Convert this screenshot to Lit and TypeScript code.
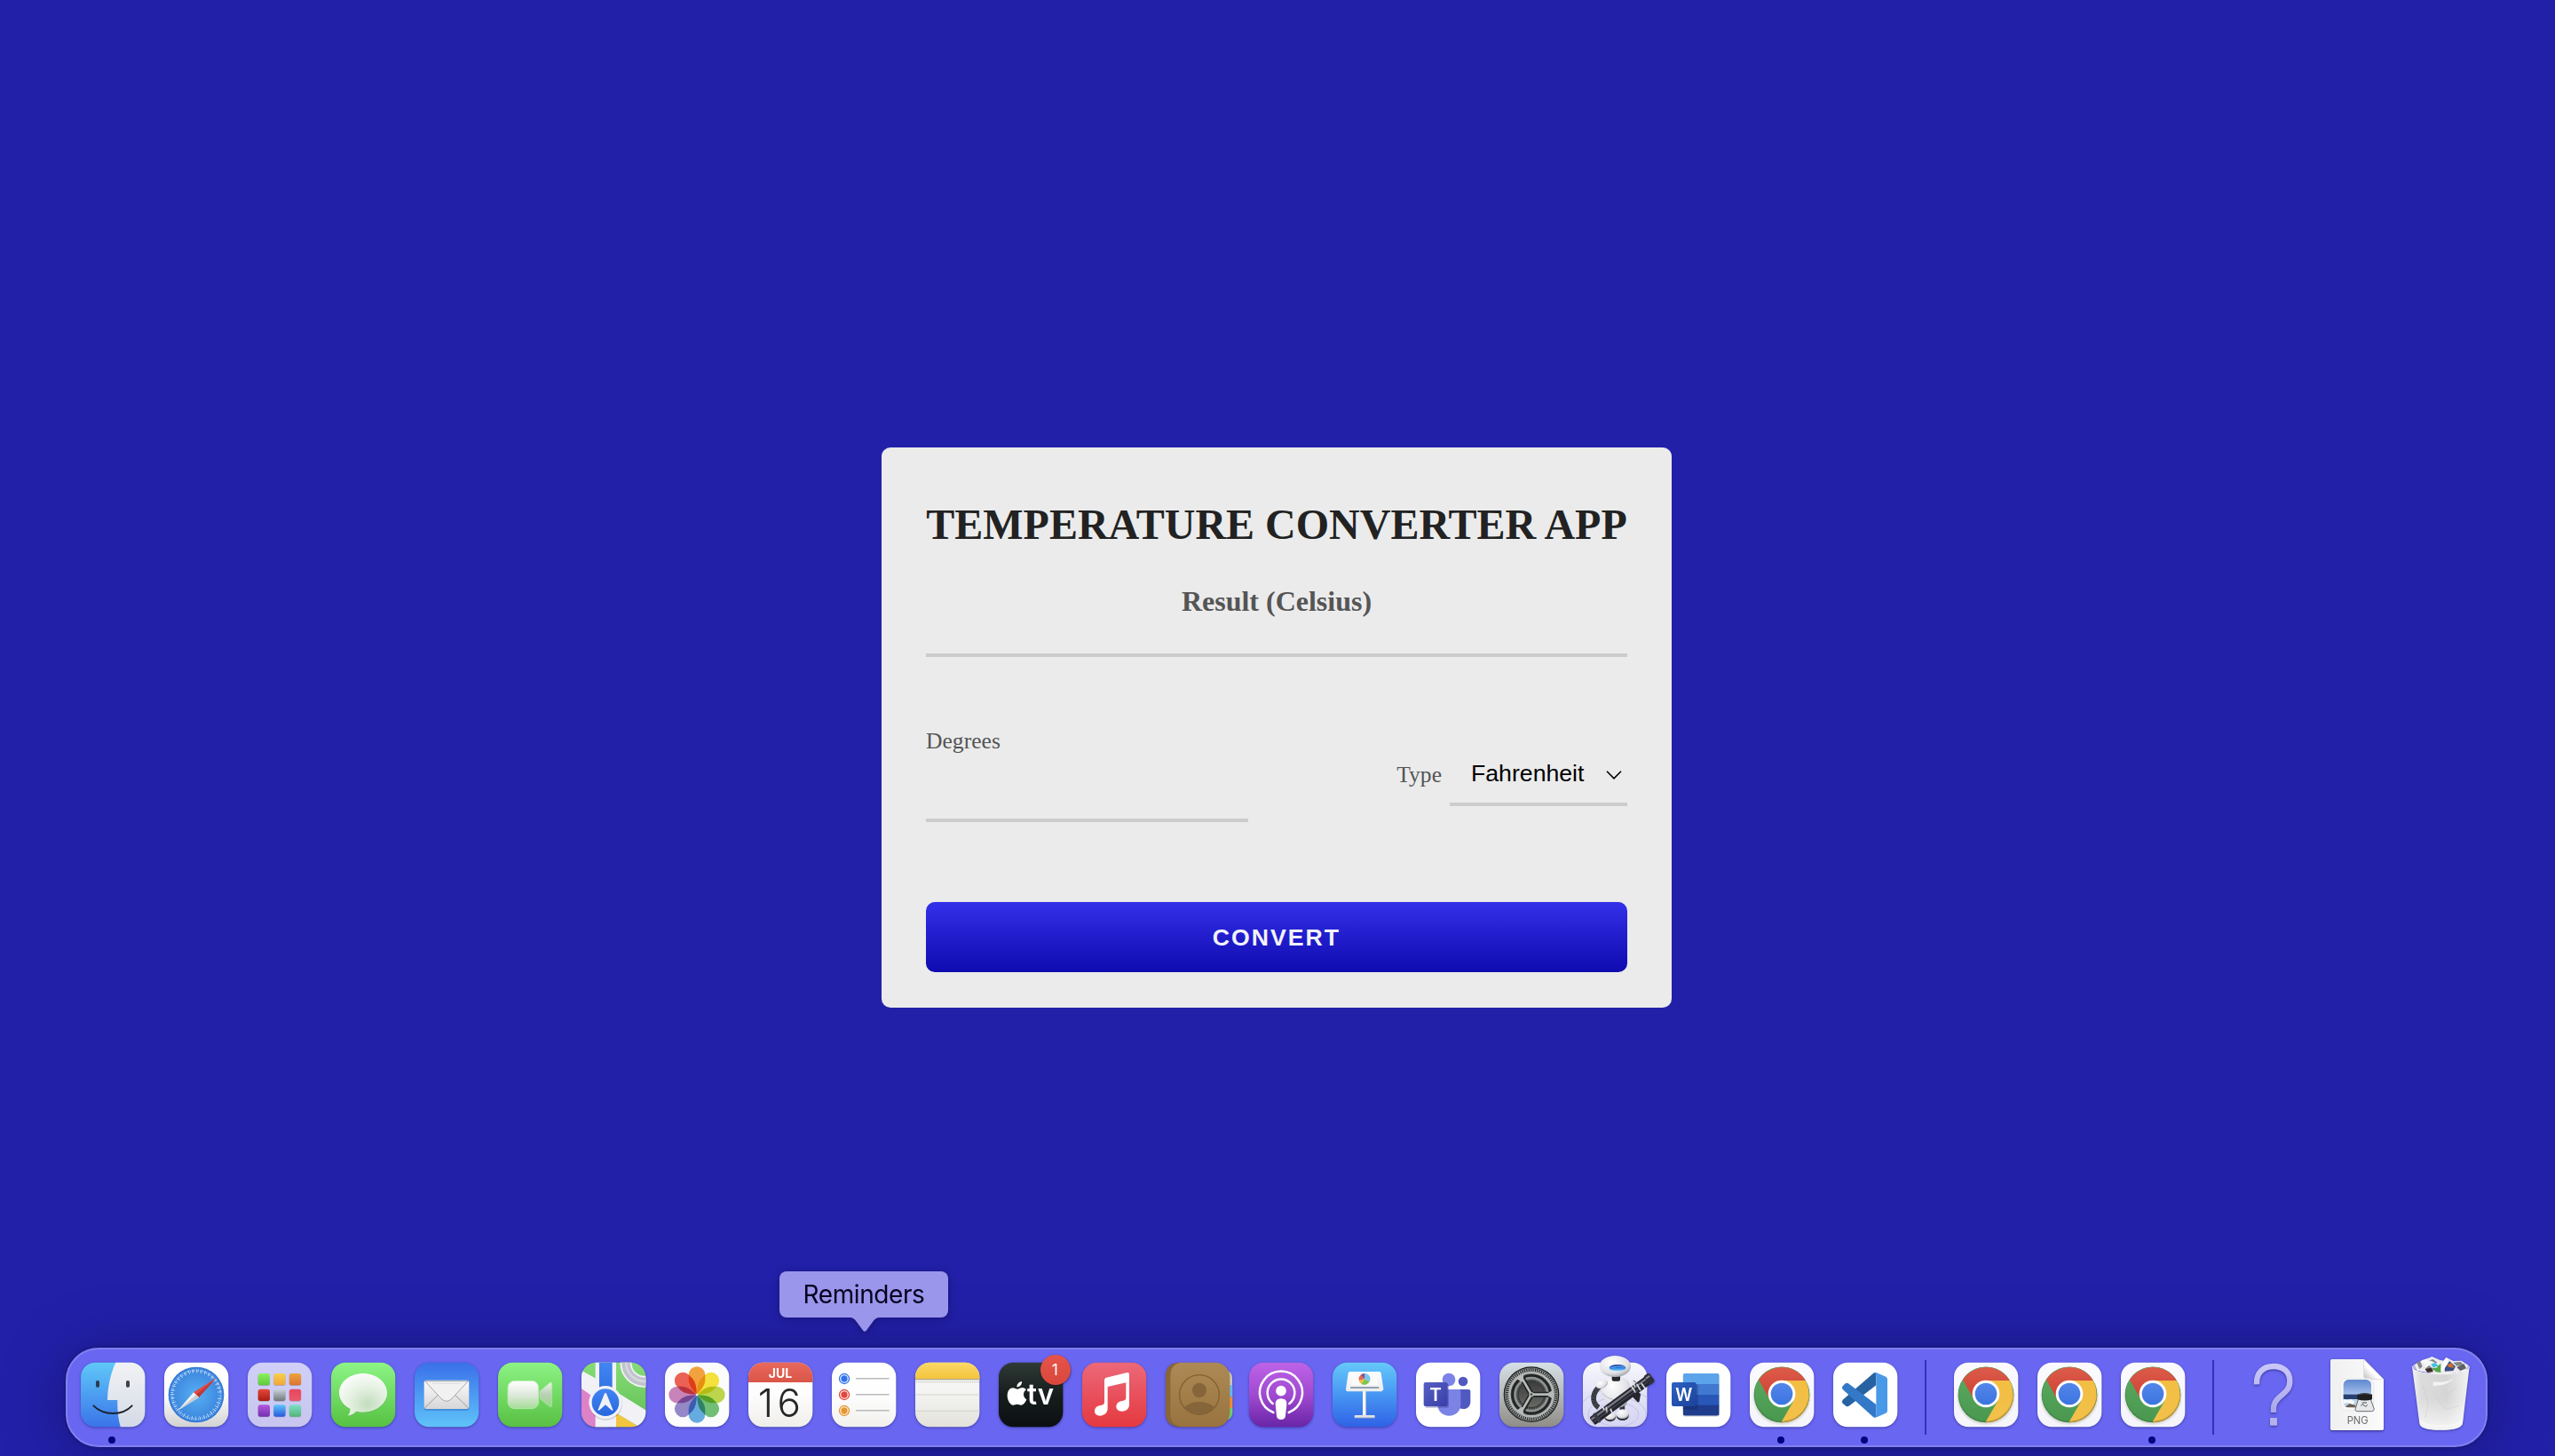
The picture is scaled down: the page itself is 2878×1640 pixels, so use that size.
import { LitElement, html, css, svg, nothing, TemplateResult } from "lit";
import { customElement, state } from "lit/decorators.js";

/* ---------- svg helpers ---------- */

// Vertical gradient.
const vgrad = (id: string, ...stops: string[]) => svg`
  <linearGradient id=${id} x1="0" y1="0" x2="0" y2="1">
    ${stops.map((c, i) => svg`<stop offset=${i / (stops.length - 1)} stop-color=${c}></stop>`)}
  </linearGradient>`;

// Rounded app tile, 217 units wide, at the icon's origin.
const tile = (x: number, y: number, fill: string) =>
  svg`<rect x=${x} y=${y - 0.5} width="217" height="217" rx="49" fill=${fill}></rect>`;

interface DockIcon {
  name: string;
  x: number;
  y?: number;
  art: TemplateResult | unknown;
  running?: boolean;
  tip?: boolean;
}

/* ---------- icons ---------- */

const finder = svg`
  <defs>${vgrad("fi-a", "#5fc8f8", "#3a74ea")}${vgrad("fi-b", "#f3f3f5", "#d3dae6")}
    <clipPath id="fi-c"><rect x="93" y="104.500" width="217" height="217" rx="49"></rect></clipPath></defs>
  ${tile(93, 105, "url(#fi-a)")}
  <path clip-path="url(#fi-c)" fill="url(#fi-b)" d="M213 100C194 138 184 186 183 231H217C216 262 219 294 228 325H312V100Z"></path>
  <rect x="144" y="165" width="12" height="23" rx="5" fill="#2b3b50"></rect>
  <rect x="246" y="165" width="12" height="23" rx="5" fill="#3b4148"></rect>
  <path d="M136 250Q162 276 202 276T266 250" fill="none" stroke="#1b222c" stroke-width="5.500" stroke-linecap="round"></path>`;

const safari = svg`
  <defs>${vgrad("sa-a", "#ffffff", "#fdfdfd", "#d2d2d2")}${vgrad("sa-b", "#2f79d4", "#2f6fd6")}
    <radialGradient id="sa-c"><stop offset="0" stop-color="#57b0f2"></stop><stop offset="1" stop-color="#3a83dd"></stop></radialGradient></defs>
  ${tile(375, 105, "url(#sa-a)")}
  <circle cx="483" cy="213" r="94" fill="url(#sa-b)"></circle>
  <circle cx="483" cy="213" r="91" fill="url(#sa-c)"></circle>
  <circle cx="483" cy="213" r="79.500" fill="none" stroke="#d8ecfb" stroke-width="13" stroke-dasharray="1.900 12" stroke-dashoffset="1"></circle>
  <circle cx="483" cy="213" r="82" fill="none" stroke="#d8ecfb" stroke-width="8" stroke-dasharray="1.900 5.257" stroke-dashoffset="1"></circle>
  <path d="M550 157L474 205L483 213L492 222Z" fill="#e34a41"></path>
  <path d="M550 157L483 213L492 222Z" fill="#b93a3a"></path>
  <path d="M421 266L474 205L492 222Z" fill="#f3f3f3"></path>
  <path d="M421 266L483 213L492 222Z" fill="#c9cdd2"></path>`;

const padColors = [
  ["#8cf05f", "#5cc93c"], ["#f7cf4b", "#efa73a"], ["#eda23b", "#dc7433"],
  ["#e5483a", "#a91c14"], ["#c9d4dc", "#71777a"], ["#e8455f", "#e9596c"],
  ["#b457e0", "#7430b0"], ["#5cc4fb", "#2a59dd"], ["#7edfc9", "#52b578"],
];
const launchpad = svg`
  <defs>${vgrad("la-t", "#cfcff8", "#c8c6ee")}${padColors.map((c, i) => vgrad("la-" + i, c[0], c[1]))}</defs>
  ${tile(657, 105, "url(#la-t)")}
  ${padColors.map((_, i) => svg`
    <rect x=${692 + (i % 3) * 52.7} y=${143 + Math.floor(i / 3) * 53} width="40" height="40" rx="8" fill="#00000030"></rect>
    <rect x=${692 + (i % 3) * 52.7} y=${141 + Math.floor(i / 3) * 53} width="40" height="40" rx="8" fill=${`url(#la-${i})`}></rect>`)}`;

const messages = svg`
  <defs>${vgrad("me-a", "#8cf585", "#57c143")}
    <radialGradient id="me-b" cx=".6" cy=".72" r=".8"><stop offset="0" stop-color="#c3dcbd"></stop><stop offset=".45" stop-color="#e2efdf"></stop><stop offset="1" stop-color="#ffffff"></stop></radialGradient></defs>
  ${tile(939, 105, "url(#me-a)")}
  <path d="M1047 144C1002 144 966 173 966 209C966 231 980 251 1003 262C1004 271 1001 279 995 286C1007 284 1017 279 1024 271C1032 273 1039 274 1047 274C1092 274 1128 245 1128 209S1092 144 1047 144Z" fill="#00501822"></path>
  <path d="M1047 141C1002 141 966 171 966 207C966 229 980 249 1003 260C1004 269 1001 277 995 284C1007 282 1017 277 1024 269C1032 271 1039 272 1047 272C1092 272 1128 243 1128 207S1092 141 1047 141Z" fill="url(#me-b)"></path>`;

const mail = svg`
  <defs>${vgrad("ma-a", "#3a70ea", "#5fc3f9")}${vgrad("ma-b", "#fbfbfb", "#d6d6d8")}</defs>
  ${tile(51, 105, "url(#ma-a)")}
  <rect x="83" y="169" width="152" height="97" rx="8" fill="#1c4a9a55"></rect>
  <rect x="83" y="164" width="152" height="97" rx="8" fill="url(#ma-b)"></rect>
  <path d="M85 258L129 215M233 258L189 215" stroke="#8e8e90" stroke-width="2.500"></path>
  <path d="M86 167L139 224Q159 246 179 224L232 167Z" fill="#f1f1f1" stroke="#a6a6a8" stroke-width="3"></path>
  <path d="M112 175H207" stroke="#dedede" stroke-width="3"></path>`;

const facetime = svg`
  <defs>${vgrad("fa-a", "#8cf384", "#59c044")}${vgrad("fa-b", "#ffffff", "#dfe9dc", "#a5dc98")}${vgrad("fa-c", "#eaf5e8", "#b9cfb5", "#97d98a")}</defs>
  ${tile(333, 105, "url(#fa-a)")}
  <rect x="366" y="166" width="104" height="94" rx="23" fill="url(#fa-b)" stroke="#b4ecab" stroke-width="2.500"></rect>
  <path d="M479 197L507 173Q515 168 515 178V247Q515 257 507 252L479 230Q474 226 474 213T479 197Z" fill="url(#fa-c)" stroke="#b4ecab" stroke-width="2"></path>`;

const maps = svg`
  <defs><clipPath id="mp-c"><rect x="615" y="104.500" width="217" height="217" rx="49"></rect></clipPath>
    ${vgrad("mp-b", "#4285f2", "#2766dd")}${vgrad("mp-g", "#86dc78", "#5fbf50")}</defs>
  <g clip-path="url(#mp-c)">
    <rect x="612" y="102" width="222" height="222" fill="url(#mp-g)"></rect>
    <path d="M612 186L700 240V324H612Z" fill="#dd82c6"></path>
    <path d="M728 272L815 324H728Z" fill="#f2c53f"></path>
    <path d="M612 130L664 158L735 205L834 266V324H815L728 272L612 190Z" fill="#f1f1f6"></path>
    <rect x="662" y="102" width="70" height="222" fill="#f1f1f6"></rect>
    <rect x="675" y="102" width="44" height="170" fill="url(#mp-b)"></rect>
    <circle cx="828" cy="106" r="63" fill="none" stroke="#f4f4f8" stroke-width="39"></circle>
    <circle cx="828" cy="106" r="63" fill="none" stroke="#c2c4cd" stroke-width="29"></circle>
    <circle cx="828" cy="106" r="62" fill="none" stroke="#d6d8df" stroke-width="7"></circle>
  </g>
  <circle cx="697" cy="243" r="56" fill="#00000028"></circle>
  <circle cx="696" cy="239" r="56" fill="#f0f1f7"></circle>
  <circle cx="696" cy="239" r="46" fill="url(#mp-b)"></circle>
  <path d="M692 211Q696 202 700 211L721 263Q722 269 716 265L696 247L676 265Q670 269 671 263Z" fill="#f0f1f6"></path>`;

const petals = ["#f09a2e", "#f2df2f", "#b6d23f", "#66b96c", "#5aa5de", "#8c7fc4", "#c47ab4", "#ea5547"];
const photos = svg`
  ${tile(897, 105, "#fcfcfc")}
  <g class="blend">
    ${petals.map((c, i) => svg`<path class="petal" transform=${`translate(1005 213) rotate(${i * 45})`} fill=${c}
      d="M-28 -67A28 28 0 0 1 28 -67V-48Q27 -28 0 -1Q-27 -28 -28 -48Z"></path>`)}
  </g>
  <circle cx="1005" cy="213" r="4" fill="#f4f4f4"></circle>`;

const calendar = svg`
  <defs>${vgrad("ca-a", "#ffffff", "#fdfdfd", "#efeeea")}${vgrad("ca-b", "#ea6a5e", "#d95548")}
    <clipPath id="ca-c"><rect x="69" y="374.500" width="217" height="217" rx="49"></rect></clipPath></defs>
  ${tile(69, 375, "url(#ca-a)")}
  <rect clip-path="url(#ca-c)" x="66" y="370" width="224" height="71" fill="url(#ca-b)"></rect>
  <text x="177" y="427" text-anchor="middle" class="sf" font-size="42" font-weight="700" fill="#ffffff">JUL</text>
  <text x="101" y="558" class="sf" font-size="132" font-weight="300" textLength="145" fill="#262626">16</text>`;

const reminders = svg`
  <defs>${vgrad("re-a", "#ffffff", "#fefefe", "#f1f0ed")}</defs>
  ${tile(351, 375, "url(#re-a)")}
  ${["#2f73ea", "#e2473c", "#e8962f"].map((c, i) => svg`
    <circle cx="393" cy=${429 + i * 54} r="16.500" fill="none" stroke=${c} stroke-width="4"></circle>
    <circle cx="393" cy=${429 + i * 54} r="11" fill=${c}></circle>
    <path d=${`M432 ${428.5 + i * 54}H545`} stroke="#b9babd" stroke-width="4.500"></path>`)}`;

const notes = svg`
  <defs>${vgrad("no-a", "#f8f8f6", "#f3f3f1", "#e2e1da")}${vgrad("no-b", "#fadb6a", "#f4c33c")}
    <clipPath id="no-c"><rect x="633" y="374.500" width="217" height="217" rx="49"></rect></clipPath></defs>
  ${tile(633, 375, "url(#no-a)")}
  <g clip-path="url(#no-c)">
    <rect x="630" y="370" width="224" height="60" fill="url(#no-b)"></rect>
    <rect x="630" y="429" width="224" height="4" fill="#b3a98a"></rect>
    <path d="M636 440H850" stroke="#bfbfbf" stroke-width="4" stroke-dasharray="3.500 3.500"></path>
    <path d="M630 483H854M630 538H854" stroke="#d3d2ce" stroke-width="3"></path>
  </g>`;

const tv = svg`
  <defs>${vgrad("tv-a", "#2e3a36", "#171d1d", "#0c0f12")}${vgrad("tv-b", "#e5534c", "#d9483a")}</defs>
  ${tile(75, 105, "url(#tv-a)")}
  <path d="M137 194C143 194 148 189 155 189C161 189 165 192 168 196C155 204 157 223 169 229C165 239 158 248 151 248C146 248 143 245 137 245S129 248 124 248C113 248 104 231 104 216C104 200 113 190 123 190C129 190 133 194 137 194Z" fill="#fff"></path>
  <path d="M136 187C136 178 143 169 153 168C154 178 146 187 136 187Z" fill="#fff"></path>
  <text x="171" y="247" class="sf" font-size="98" font-weight="600" textLength="90" lengthAdjust="spacingAndGlyphs" fill="#fff">tv</text>
  <circle cx="268" cy="131" r="52" fill="#00000030"></circle>
  <circle cx="267" cy="129" r="51" fill="url(#tv-b)"></circle>
  <text x="265" y="147" text-anchor="middle" class="sf" font-size="52" fill="#fff">1</text>`;

const music = svg`
  <defs>${vgrad("mu-a", "#ec6879", "#e5393f")}</defs>
  ${tile(357, 105, "url(#mu-a)")}
  <path fill="#fff" d="M438 155L509 138Q516 137 516 144V246C516 261 505 269 491 269C479 269 472 262 472 253C472 242 480 236 492 234C501 232 505 231 505 223V172L443 186V259C443 275 431 284 417 284C406 284 399 278 399 268C399 257 407 251 419 249C428 247 432 246 432 238V163Q432 157 438 155Z"></path>`;

const contacts = svg`
  <defs>${vgrad("co-a", "#ad8a55", "#98733f")}</defs>
  <path d="M846 132Q864 138 864 156V182H846Z" fill="#c9c6bd"></path>
  <rect x="846" y="182" width="19" height="38" fill="#62b9ee"></rect>
  <rect x="846" y="220" width="19" height="38" fill="#ee8d35"></rect>
  <path d="M846 258H865V276Q863 292 846 299Z" fill="#68cf6b"></path>
  ${tile(639, 105, "url(#co-a)")}
  <path d="M688 104.500Q639 104.500 639 153V273Q639 321 688 321Q655 314 655 280V146Q655 112 688 104.500Z" fill="#886635"></path>
  <circle cx="753" cy="213" r="67" fill="none" stroke="#82602f" stroke-width="4"></circle>
  <ellipse cx="753" cy="198" rx="24" ry="25" fill="#86653a"></ellipse>
  <path d="M703 254Q724 237 753 237T803 254Q785 280 753 280T703 254Z" fill="#86653a"></path>`;

const podcasts = svg`
  <defs>${vgrad("po-a", "#bd63e6", "#a04ad2", "#6a25a6")}</defs>
  ${tile(921, 105, "url(#po-a)")}
  <g fill="none" stroke="#fff" stroke-width="7.500" stroke-linecap="round">
    <path d="M1003 273A72 72 0 1 1 1055 273"></path>
    <path d="M1001 243A46 46 0 1 1 1057 243"></path>
  </g>
  <circle cx="1029" cy="200" r="17.500" fill="#fff"></circle>
  <path d="M1029 226Q1049 226 1048 245L1044 284Q1042 297 1029 297T1014 284L1010 245Q1010 226 1029 226Z" fill="#fff"></path>`;

const keynote = svg`
  <defs>${vgrad("ke-a", "#65c9fa", "#4796f3", "#2f62e6")}${vgrad("ke-b", "#ffffff", "#e9ebee")}
    <linearGradient id="ke-c"><stop offset="0" stop-color="#f4f4f6"></stop><stop offset=".5" stop-color="#ffffff"></stop><stop offset="1" stop-color="#a9adb8"></stop></linearGradient></defs>
  ${tile(63, 105, "url(#ke-a)")}
  <rect x="165" y="200" width="12" height="86" fill="url(#ke-c)"></rect>
  <rect x="137" y="282" width="69" height="9" rx="3" fill="#dfe2ea"></rect>
  <path d="M137 291H206" stroke="#9aa2bb" stroke-width="2.500"></path>
  <path d="M121 135H221Q226 135 227 141L235 193Q235 201 228 202H114Q107 201 108 193L116 141Q117 135 121 135Z" fill="url(#ke-b)"></path>
  <path d="M135 139H209L217 181H127Z" fill="#fafafa"></path>
  <rect x="123" y="186" width="97" height="6" rx="2" fill="#93a1b0"></rect>
  <path d="M171 160V141A19 19 0 0 1 188 169Z" fill="#73c6ef"></path>
  <path d="M171 160L188 169A19 19 0 0 1 160 176Z" fill="#80c34e"></path>
  <path d="M171 160L160 176A19 19 0 0 1 152 164Z" fill="#eebb45"></path>
  <path d="M171 160L152 164A19 19 0 0 1 158 146Z" fill="#e06a50"></path>
  <path d="M171 160L158 146A19 19 0 0 1 171 141Z" fill="#8d4683"></path>`;

const teams = svg`
  <defs><linearGradient id="te-a" x1="0" y1="0" x2="1" y2="1"><stop offset="0" stop-color="#5760c3"></stop><stop offset="1" stop-color="#383ea8"></stop></linearGradient></defs>
  ${tile(345, 105, "#ffffff")}
  <circle cx="504" cy="168" r="16" fill="#5059c0"></circle>
  <path d="M490 195H522Q529 195 529 202V236C529 252 518 261 506 261Q498 261 490 258Z" fill="#5059c0"></path>
  <circle cx="456" cy="162" r="22" fill="#7b83e6"></circle>
  <path d="M418 195H489Q496 195 496 202V246C496 270 478 284 457 284S418 270 418 246Z" fill="#7b83e6"></path>
  <rect x="376" y="176" width="80" height="81" rx="6" fill="#2c308055"></rect>
  <rect x="371" y="171" width="81" height="81" rx="6" fill="url(#te-a)"></rect>
  <text x="411" y="234" text-anchor="middle" class="sf" font-size="62" font-weight="600" fill="#fff">T</text>`;

const settings = svg`
  <defs>${vgrad("se-a", "#d6e0e6", "#b5b9b9", "#8f8d88")}${vgrad("se-b", "#3c3d3c", "#686864")}</defs>
  ${tile(627, 105, "url(#se-a)")}
  <circle cx="735" cy="212" r="94" fill="#1f2121"></circle>
  <circle cx="735" cy="212" r="89" fill="none" stroke="#a4a8a7" stroke-width="2"></circle>
  <circle cx="735" cy="212" r="82" fill="none" stroke="#a4a8a7" stroke-width="10" stroke-dasharray="3.900 3.256"></circle>
  <circle cx="735" cy="212" r="74" fill="#4a4b4a" stroke="#b3b7b6" stroke-width="8"></circle>
  <circle cx="735" cy="212" r="68" fill="#232525"></circle>
  <circle cx="735" cy="212" r="55" fill="none" stroke="#8d918f" stroke-width="9"></circle>
  <circle cx="735" cy="212" r="48" fill="none" stroke="#6f7371" stroke-width="7" stroke-dasharray="3 3.030"></circle>
  <circle cx="735" cy="212" r="43" fill="url(#se-b)"></circle>
  <g stroke="#232525" stroke-width="18"><path d="M735 212H800M735 212L703 155M735 212L703 269"></path></g>
  <g stroke="#b6bab9" stroke-width="8" stroke-linecap="round"><path d="M735 212H803M735 212L700 152M735 212L700 272"></path></g>
  <g fill="#b6bab9"><path d="M808 197V227L786 214V210ZM710 143L684 158L702 170L705 168ZM710 281L684 266L702 254L705 256Z"></path></g>
  <circle cx="735" cy="212" r="8" fill="#b6bab9"></circle><circle cx="735" cy="212" r="4" fill="#4a4b4a"></circle>`;

const automator = svg`
  <defs>${vgrad("au-a", "#f8f8fd", "#e2e2f6", "#d6d5f3")}
    <radialGradient id="au-b" cx=".4" cy=".3" r=".8"><stop offset="0" stop-color="#ffffff"></stop><stop offset=".65" stop-color="#e1e1e6"></stop><stop offset="1" stop-color="#8e8e98"></stop></radialGradient>
    ${vgrad("au-c", "#1d3f9c", "#2d7be0", "#7fdcfa")}
    <clipPath id="au-k"><rect x="909" y="104.500" width="217" height="217" rx="49"></rect></clipPath></defs>
  ${tile(909, 105, "url(#au-a)")}
  <g clip-path="url(#au-k)" fill="none" stroke="#c3c3e2" stroke-width="3">
    <ellipse cx="1025" cy="280" rx="72" ry="40"></ellipse><ellipse cx="1025" cy="280" rx="98" ry="58"></ellipse><ellipse cx="1025" cy="280" rx="132" ry="88"></ellipse>
  </g>
  <path d="M968 184C942 202 936 238 962 256" fill="none" stroke="#2b2b33" stroke-width="17"></path>
  <path d="M968 184C942 202 936 238 962 256" fill="none" stroke="#62626e" stroke-width="15" stroke-dasharray="2 4"></path>
  <path d="M1002 255V278M1042 248V272" stroke="#33333c" stroke-width="17"></path>
  <ellipse cx="1001" cy="289" rx="19" ry="15" fill="#2f2f36"></ellipse><ellipse cx="1001" cy="284" rx="19" ry="14" fill="url(#au-b)"></ellipse>
  <ellipse cx="1043" cy="284" rx="21" ry="16" fill="#2f2f36"></ellipse><ellipse cx="1043" cy="278" rx="21" ry="16" fill="url(#au-b)"></ellipse>
  <path d="M970 190Q975 152 1018 151Q1066 152 1067 185Q1066 220 1055 248Q1020 268 992 246Q976 220 970 190Z" fill="url(#au-b)"></path>
  <path d="M974 208Q1008 244 1058 224" fill="none" stroke="#b7b7c0" stroke-width="3"></path>
  <ellipse cx="973" cy="177" rx="21" ry="14" transform="rotate(-24 973 177)" fill="url(#au-b)"></ellipse>
  <rect x="1007" y="146" width="28" height="21" rx="6" fill="#25252c"></rect>
  <ellipse cx="1018" cy="117" rx="53" ry="36" fill="url(#au-b)"></ellipse>
  <ellipse cx="1026" cy="122" rx="28" ry="11" fill="url(#au-c)"></ellipse>
  <path d="M1004 122Q1026 113 1050 119" stroke="#85cdf6" stroke-width="2" fill="none"></path>
  <path d="M1078 216L1096 234L1100 212L1088 202Z" fill="#26262d" stroke="#26262d" stroke-width="8" stroke-linejoin="round"></path>
  <g transform="translate(1040 229) rotate(-36.500)">
    <rect x="-124" y="-16" width="252" height="32" rx="5" fill="#25252d"></rect>
    <rect x="-122" y="-10" width="248" height="7" fill="#777784"></rect>
    <rect x="-122" y="3" width="248" height="3" fill="#4d4d59"></rect>
    <rect x="106" y="-19" width="19" height="37" rx="4" fill="#30303a"></rect>
    <rect x="108" y="-11" width="15" height="6" fill="#8f8f9b"></rect>
    <rect x="-109" y="-18" width="11" height="36" rx="3" fill="#3b3b45"></rect>
  </g>
  <g fill="none" stroke="#dcdce4" stroke-width="5" stroke-linecap="round">
    <path d="M972 247L980 262M988 256L990 272M1003 262L1010 280"></path>
    <path d="M1078 166L1084 184M1092 178L1103 197M1073 184L1086 204M1108 176L1118 190"></path>
  </g>
  <g fill="none" stroke="#53535f" stroke-width="3"><path d="M1080 165L1090 172M1085 204L1095 200M984 268L994 272"></path></g>`;

const word = svg`
  <defs><linearGradient id="wo-a" x1="0" y1="0" x2="1" y2="1"><stop offset="0" stop-color="#2d62c4"></stop><stop offset="1" stop-color="#1b429b"></stop></linearGradient>
    <clipPath id="wo-c"><rect x="377" y="141" width="123" height="143" rx="7"></rect></clipPath></defs>
  ${tile(321, 105, "#ffffff")}
  <rect x="377" y="144" width="123" height="143" rx="7" fill="#00000026"></rect>
  <g clip-path="url(#wo-c)">
    <rect x="377" y="141" width="123" height="37" fill="#5ba3ea"></rect>
    <rect x="377" y="177" width="123" height="36" fill="#4178d0"></rect>
    <rect x="377" y="213" width="123" height="36" fill="#2857b8"></rect>
    <rect x="377" y="248" width="123" height="36" fill="#1f3d8c"></rect>
    <rect x="370" y="178" width="58" height="85" rx="6" fill="#10256055"></rect>
  </g>
  <rect x="339" y="171" width="83" height="81" rx="6" fill="url(#wo-a)"></rect>
  <text x="380" y="233" text-anchor="middle" class="sf" font-size="60" font-weight="600" textLength="57" lengthAdjust="spacingAndGlyphs" fill="#fff">W</text>`;

const chrome = svg`
  <defs>${vgrad("ch-t", "#fbfaff", "#f4f4fb")}${vgrad("ch-r", "#dd5a49", "#cb4334")}${vgrad("ch-y", "#f2be42", "#f3c04b")}${vgrad("ch-g", "#5cab60", "#4a9850")}${vgrad("ch-b", "#5386ea", "#3b74e0")}
    <radialGradient id="ch-s"><stop offset=".8" stop-color="#4a4a20" stop-opacity=".35"></stop><stop offset="1" stop-color="#4a4a20" stop-opacity="0"></stop></radialGradient></defs>
  ${tile(603, 105, "url(#ch-t)")}
  <ellipse cx="711" cy="220" rx="101" ry="98" fill="url(#ch-s)"></ellipse>
  <circle cx="711" cy="213" r="94" fill="#3b8544"></circle>
  <path d="M711 307A94 94 0 0 0 805 213H711Z" fill="#cf9331"></path>
  <circle cx="711" cy="210.500" r="92" fill="url(#ch-g)"></circle>
  <path d="M711 165H791A93 93 0 0 1 711 303L751 234Z" fill="url(#ch-y)"></path>
  <path d="M633 163A93 93 0 0 1 791 165H711L671 230Z" fill="url(#ch-r)"></path>
  <circle cx="711" cy="210" r="46" fill="#ffffff"></circle>
  <circle cx="711" cy="210" r="37" fill="url(#ch-b)"></circle>`;

const vscode = svg`
  ${tile(885, 105, "#ffffff")}
  <path d="M1030 140V181L940 250Q932 256 926 250L917 242Q912 236 917 230L1020 141Q1026 136 1030 140Z" fill="#2763a3"></path>
  <path d="M926 175Q932 171 938 176L1030 246V288Q1025 293 1019 287L917 195Q912 189 917 184Z" fill="#3379c8"></path>
  <path d="M1030 138L1063 152Q1068 155 1068 160V267Q1068 272 1063 275L1032 289Q1026 291 1022 287Q1030 289 1030 280V147Q1029 139 1022 139Q1026 136 1030 138Z" fill="#4999e9"></path>`;

const question = svg`
  <defs>${vgrad("qu-a", "#c9c7f8", "#a9a6ea")}</defs>
  <path d="M216 178C214 138 238 117 273 117C306 117 328 136 328 167C328 195 310 206 294 220C279 233 273 242 273 258V273" transform="translate(0 3)" fill="none" stroke="#3d3aa855" stroke-width="19"></path>
  <path d="M216 178C214 138 238 117 273 117C306 117 328 136 328 167C328 195 310 206 294 220C279 233 273 242 273 258V273" fill="none" stroke="url(#qu-a)" stroke-width="19"></path>
  <rect x="261" y="294" width="24" height="26" fill="#3d3aa855"></rect>
  <rect x="261" y="291" width="24" height="26" fill="#b3b0ee"></rect>`;

const pngFile = svg`
  <defs>${vgrad("pn-a", "#5c86cf", "#a9c3ec")}
    <linearGradient id="pn-f" x1="0" y1="1" x2="1" y2="0"><stop offset="0" stop-color="#bdbdbd"></stop><stop offset=".4" stop-color="#ffffff"></stop></linearGradient>
    <linearGradient id="pn-p"><stop offset="0" stop-color="#f0f0f0"></stop><stop offset="1" stop-color="#fbfbfb"></stop></linearGradient>
    <clipPath id="pn-c"><rect x="509" y="162" width="94" height="94" rx="17"></rect></clipPath></defs>
  <path d="M470 96H578L645 164V330Q645 336 640 336H470Q465 336 465 330V101Q465 96 470 96Z" fill="#24208060"></path>
  <path d="M470 93H578L645 161V328Q645 333 640 333H470Q465 333 465 328V98Q465 93 470 93Z" fill="url(#pn-p)"></path>
  <path d="M578 93L645 161H590Q578 161 578 149Z" fill="url(#pn-f)" stroke="#c9c9c9" stroke-width="1.500"></path>
  <rect x="499" y="158" width="112" height="108" rx="22" fill="#f7f7f7" stroke="#e2e2e2" stroke-width="2"></rect>
  <g clip-path="url(#pn-c)">
    <rect x="505" y="160" width="102" height="56" fill="url(#pn-a)"></rect>
    <rect x="505" y="212" width="102" height="18" fill="#27406f"></rect>
    <rect x="505" y="228" width="102" height="32" fill="#b9d3ec"></rect>
    <path d="M505 226L520 232L536 228L548 238L540 247L524 240L505 244Z" fill="#f4f8fc"></path>
    <path d="M512 256L530 243L550 249L550 258Z" fill="#6d5c4e"></path>
  </g>
  <path d="M560 226H600L613 262Q612 269 604 269H556Q548 268 549 262Z" fill="#e6e8ea" stroke="#6a6d70" stroke-width="3"></path>
  <path d="M556 212Q581 202 606 212V229Q581 236 556 229Z" fill="#1d1f21"></path>
  <path d="M558 212Q581 206 604 212" stroke="#676a6d" stroke-width="2" fill="none"></path>
  <path d="M568 250Q574 241 579 249T590 247M572 240H588" stroke="#4b4e52" stroke-width="3" fill="none"></path>
  <text x="557" y="312" text-anchor="middle" class="sf" font-size="35" textLength="72" lengthAdjust="spacingAndGlyphs" fill="#6a6a6a">PNG</text>`;

const trash = svg`
  <defs><linearGradient id="tr-a"><stop offset="0" stop-color="#f5f5f6"></stop><stop offset=".15" stop-color="#dcdcdd"></stop><stop offset=".6" stop-color="#d5d5d6"></stop><stop offset="1" stop-color="#f2f2f3"></stop></linearGradient>
    ${vgrad("tr-b", "#ffffff00", "#ffffff00", "#ffffffc0")}</defs>
  <ellipse cx="838" cy="118" rx="96" ry="21" fill="#b9b8e8"></ellipse>
  <path d="M750 112L775 96L800 88L808 84L834 95L848 100L857 87L880 99L908 98L930 114L922 134L838 146L758 132Z" fill="#ececee"></path>
  <path d="M757 104L768 98L776 118L766 126ZM790 100L812 93L826 104L800 110ZM781 122L800 114L815 130L796 138ZM880 104L906 101L914 112L892 116Z" fill="#85868b"></path>
  <path d="M803 106L822 106L830 116L812 121Z" fill="#46bfe4"></path>
  <path d="M830 114L838 108L838 138L822 136L806 122L824 122Z" fill="#58a548"></path>
  <path d="M848 106L868 100L888 118L880 132L852 134Z" fill="#3b4f86"></path>
  <path d="M858 112L874 106L884 122L866 120Z" fill="#d07030"></path>
  <path d="M785 126L806 122L812 136L792 137Z" fill="#3c2b29"></path>
  <path d="M846 100L856 87L866 101L846 132L838 130Z" fill="#fafafa"></path>
  <path d="M892 120L916 108L924 124L904 132Z" fill="#5f6067"></path>
  <path d="M770 100L786 112L782 128L800 112L818 104L804 98L788 94Z" fill="#f6f6f6"></path>
  <path d="M741 118C748 138 790 143 838 143S928 138 935 118L912 308Q909 332 838 332T766 308Z" fill="url(#tr-a)"></path>
  <path d="M741 118C748 138 790 143 838 143S928 138 935 118L912 308Q909 332 838 332T766 308Z" fill="url(#tr-b)"></path>
  <path d="M741 118C748 138 790 143 838 143S928 138 935 118" fill="none" stroke="#f8f8fa" stroke-width="3"></path>
  <path d="M812 182Q862 186 888 150Q870 174 812 170Z" fill="#f3f3f4"></path>
  <path d="M776 180L796 240L786 290M860 210L892 188M816 214L856 262L900 250" fill="none" stroke="#c9c9cb" stroke-width="4" opacity=".35"></path>
  <path d="M768 300Q775 318 838 318T909 300" fill="none" stroke="#ffffff" stroke-width="5" opacity=".6"></path>`;

const apps: DockIcon[] = [
  { name: "Finder", x: 93, art: finder, running: true },
  { name: "Safari", x: 375, art: safari },
  { name: "Launchpad", x: 657, art: launchpad },
  { name: "Messages", x: 939, art: messages },
  { name: "Mail", x: 51, art: mail },
  { name: "FaceTime", x: 333, art: facetime },
  { name: "Maps", x: 615, art: maps },
  { name: "Photos", x: 897, art: photos },
  { name: "Calendar", x: 69, y: 375, art: calendar },
  { name: "Reminders", x: 351, y: 375, art: reminders, tip: true },
  { name: "Notes", x: 633, y: 375, art: notes },
  { name: "TV", x: 75, art: tv },
  { name: "Music", x: 357, art: music },
  { name: "Contacts", x: 639, art: contacts },
  { name: "Podcasts", x: 921, art: podcasts },
  { name: "Keynote", x: 63, art: keynote },
  { name: "Teams", x: 345, art: teams },
  { name: "Settings", x: 627, art: settings },
  { name: "Automator", x: 909, art: automator },
  { name: "Word", x: 321, art: word },
  { name: "Chrome", x: 603, art: chrome, running: true },
  { name: "Code", x: 885, art: vscode, running: true },
];
const windows: DockIcon[] = [
  { name: "Chrome", x: 603, art: chrome },
  { name: "Chrome", x: 603, art: chrome },
  { name: "Chrome", x: 603, art: chrome, running: true },
];
const files: DockIcon[] = [
  { name: "Missing", x: 165, art: question },
  { name: "Picture", x: 447, art: pngFile },
  { name: "Trash", x: 729, art: trash },
];

/* ---------- dock ---------- */

@customElement("app-dock")
export class AppDock extends LitElement {
  static styles = css`
    :host { display: block; }
    .dock {
      box-sizing: border-box;
      display: flex;
      width: 2728px;
      height: 112px;
      padding: 0 4px;
      border: 2px solid #8280f1;
      border-radius: 37px;
      background: #6967f1;
      box-shadow: 0 0 4px rgba(10, 8, 60, 0.5), 0 6px 70px rgba(16, 14, 60, 0.42);
    }
    .item {
      position: relative;
      display: flex;
      flex-direction: column;
      align-items: center;
      width: 94px;
      padding-top: 15px;
    }
    .art {
      width: 72px;
      height: 72px;
      overflow: visible;
      filter: drop-shadow(0 1px 1.5px rgba(20, 16, 90, 0.45));
    }
    .dot {
      width: 8px;
      height: 8px;
      margin: 11px 2px 0 0;
      border-radius: 50%;
      background: #020080;
    }
    .sep {
      width: 2px;
      height: 84px;
      margin: 12px 20px 0;
      background: #332fc0;
    }
    .sf { font-family: Inter, "Liberation Sans", sans-serif; }
    .blend { isolation: isolate; }
    .petal { mix-blend-mode: multiply; opacity: 0.93; }
    .tip {
      position: absolute;
      bottom: 144px;
      left: -48px;
      display: flex;
      align-items: center;
      justify-content: center;
      width: 190px;
      height: 52px;
      border-radius: 8px;
      background: #9a96ec;
      color: #05031f;
      font: 400 28px/34px Inter, "Liberation Sans", sans-serif;
      letter-spacing: -0.4px;
      filter: drop-shadow(0 1px 4px rgba(10, 8, 60, 0.45));
    }
    .tail {
      position: absolute;
      top: 51px;
      left: 78px;
      width: 36px;
      height: 17px;
      fill: #9a96ec;
    }
  `;

  private item(i: DockIcon) {
    return html`<div class="item">
      <svg class="art" viewBox=${`${i.x} ${i.y ?? 105} 216 216`} aria-hidden="true">${i.art}</svg>
      ${i.running ? html`<span class="dot"></span>` : nothing}
      ${i.tip
        ? html`<div class="tip">${i.name}<svg class="tail" viewBox="0 0 36 17"><path d="M0 0H36V1C31 1 29 3 27 6L20 15.500Q18 18 16 15.500L9 6C7 3 5 1 0 1Z"></path></svg></div>`
        : nothing}
    </div>`;
  }

  render() {
    return html`<div class="dock">
      ${apps.map((i) => this.item(i))}
      <div class="sep"></div>
      ${windows.map((i) => this.item(i))}
      <div class="sep"></div>
      ${files.map((i) => this.item(i))}
    </div>`;
  }
}

/* ---------- converter ---------- */

@customElement("temperature-converter")
export class TemperatureConverter extends LitElement {
  @state() private result = "";
  @state() private degrees = "";
  @state() private type = "Fahrenheit";

  static styles = css`
    :host { display: block; }
    .card {
      box-sizing: border-box;
      display: flex;
      flex-direction: column;
      width: 890px;
      height: 631px;
      padding: 60px 50px 40px;
      border-radius: 10px;
      background: #ebebeb;
      color: #555555;
      font-family: "Liberation Serif", "Times New Roman", serif;
    }
    .title {
      margin: 0;
      color: #222222;
      font-size: 48px;
      font-weight: 700;
      line-height: 54px;
      text-align: center;
      white-space: nowrap;
    }
    .caption {
      margin: 41px 0 0;
      font-size: 32px;
      font-weight: 700;
      line-height: 36px;
      text-align: center;
    }
    .result {
      height: 41px;
      border-bottom: 4px solid #cccccc;
      font-size: 32px;
      line-height: 41px;
      text-align: center;
    }
    .row {
      display: flex;
      align-items: center;
      justify-content: space-between;
      height: 106px;
      margin-top: 80px;
      font-size: 25.6px;
      line-height: 30px;
    }
    .field { display: flex; flex-direction: column; }
    .input {
      box-sizing: border-box;
      width: 363px;
      height: 76px;
      padding: 20px 10px;
      border: 0;
      border-bottom: 4px solid #cccccc;
      border-radius: 0;
      outline: 0;
      background: transparent;
      font: 26.667px "Liberation Sans", Arial, sans-serif;
    }
    .type { display: flex; align-items: center; gap: 9px; }
    .pick {
      display: flex;
      align-items: center;
      box-sizing: border-box;
      width: 200px;
      height: 70px;
      padding-right: 6px;
      border-bottom: 4px solid #cccccc;
    }
    .select {
      flex: 1;
      margin: 0;
      padding: 0 0 0 24px;
      border: 0;
      outline: 0;
      appearance: none;
      background: transparent;
      color: #000000;
      font: 26.667px/34px "Liberation Sans", Arial, sans-serif;
    }
    .chevron { width: 18px; height: 10px; margin-top: 3px; overflow: visible; }
    .convert {
      height: 79px;
      margin-top: 90px;
      padding: 0;
      border: 0;
      border-radius: 10px;
      background: linear-gradient(#3430ea, #1f1bc8 55%, #0f0bb0);
      color: #f2f2fb;
      font: 700 26.667px/34px "Liberation Sans", Arial, sans-serif;
      letter-spacing: 2px;
    }
  `;

  private convert() {
    const n = parseFloat(this.degrees);
    if (Number.isNaN(n)) return;
    const c = this.type === "Fahrenheit" ? ((n - 32) * 5) / 9 : n - 273.15;
    this.result = c.toFixed(2);
  }

  render() {
    return html`<section class="card">
      <h1 class="title">TEMPERATURE CONVERTER APP</h1>
      <h2 class="caption">Result (Celsius)</h2>
      <div class="result">${this.result}</div>
      <div class="row">
        <label class="field">Degrees
          <input class="input" .value=${this.degrees} @input=${(e: Event) => (this.degrees = (e.target as HTMLInputElement).value)} />
        </label>
        <label class="type"><span>Type</span>
          <span class="pick">
            <select class="select" @change=${(e: Event) => (this.type = (e.target as HTMLSelectElement).value)}>
              <option>Fahrenheit</option>
              <option>Kelvin</option>
            </select>
            <svg class="chevron" viewBox="0 0 18 10"><path d="M1 0.800L9 8.800L17 0.800" fill="none" stroke="#000" stroke-width="1.600"></path></svg>
          </span>
        </label>
      </div>
      <button class="convert" @click=${this.convert}>CONVERT</button>
    </section>`;
  }
}

@customElement("app-root")
export class AppRoot extends LitElement {
  static styles = css`
    :host {
      display: grid;
      grid-template-rows: 1fr auto 1fr;
      justify-items: center;
      box-sizing: border-box;
      height: 100vh;
      min-height: 1640px;
      padding-bottom: 1px;
      overflow: hidden;
      background: #2220a9;
    }
    .converter { grid-row: 2; margin-right: 2px; }
    .dock { grid-row: 3; align-self: end; margin: 0 2px 9px 0; }
  `;

  render() {
    return html`
      <temperature-converter class="converter"></temperature-converter>
      <app-dock class="dock"></app-dock>
    `;
  }
}
